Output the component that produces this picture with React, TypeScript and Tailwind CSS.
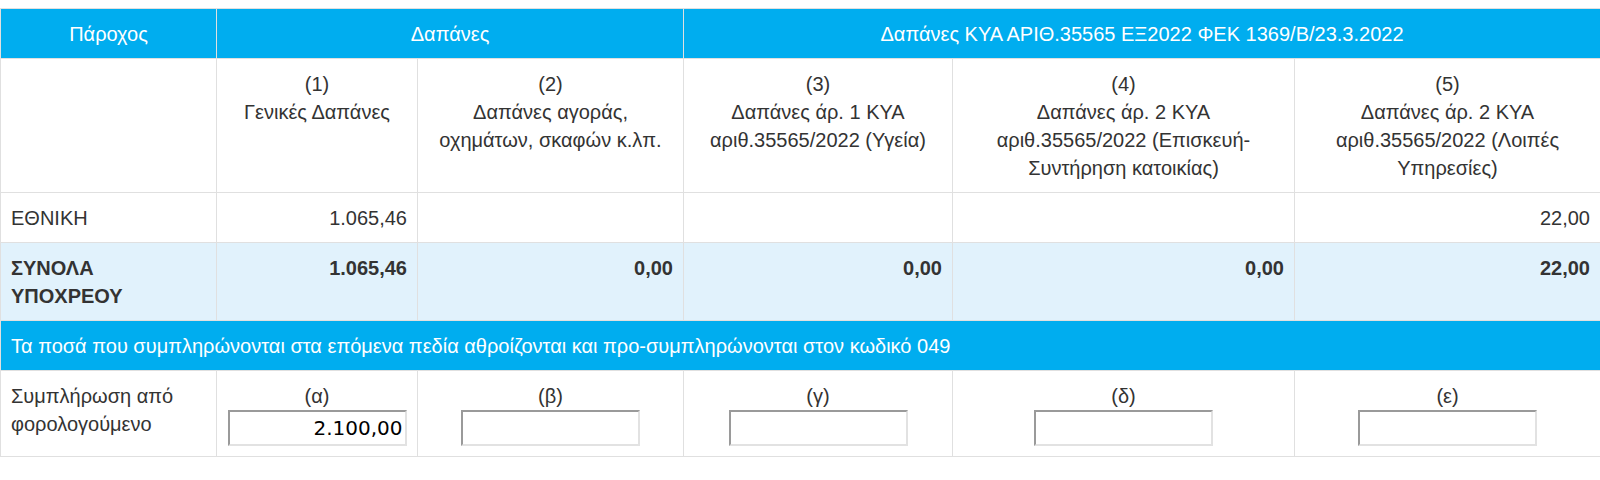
import React from "react";

const cell = "border border-[#e0e0e0] px-[10px] pt-[11px] pb-[10px] align-top";

function Field({ label, value }: { label: string; value?: string }) {
  return (
    <div className="flex flex-col items-center">
      <div className="leading-[28px] text-[#333]">{label}</div>
      <input
        readOnly
        value={value ?? ""}
        className="box-border h-[36px] w-[179px] border-2 border-t-[#9a9a9a] border-l-[#9a9a9a] border-b-[#e2e2e2] border-r-[#e2e2e2] bg-white px-[2px] text-right font-['DejaVu_Sans',Verdana,sans-serif] text-[20px] text-black outline-none"
      />
    </div>
  );
}

export default function App() {
  return (
    <div className="w-[1600px] bg-white pt-[8px] font-['Liberation_Sans',Arial,sans-serif] text-[20px] leading-[28px] text-[#333]">
      <table className="w-full table-fixed border-collapse">
        <colgroup>
          <col className="w-[216px]" />
          <col className="w-[201px]" />
          <col className="w-[266px]" />
          <col className="w-[269px]" />
          <col className="w-[342px]" />
          <col className="w-[306px]" />
        </colgroup>
        <tbody>
          <tr className="bg-[#00adef] text-white">
            <td className={`${cell} text-center`}>Πάροχος</td>
            <td className={`${cell} text-center`} colSpan={2}>Δαπάνες</td>
            <td className={`${cell} text-center`} colSpan={3}>Δαπάνες ΚΥΑ ΑΡΙΘ.35565 ΕΞ2022 ΦΕΚ 1369/Β/23.3.2022</td>
          </tr>
          <tr className="bg-white">
            <td className={cell}></td>
            <td className={`${cell} text-center`}>(1)<br />Γενικές Δαπάνες</td>
            <td className={`${cell} text-center`}>(2)<br />Δαπάνες αγοράς,<br />οχημάτων, σκαφών κ.λπ.</td>
            <td className={`${cell} text-center`}>(3)<br />Δαπάνες άρ. 1 ΚΥΑ<br />αριθ.35565/2022 (Υγεία)</td>
            <td className={`${cell} text-center`}>(4)<br />Δαπάνες άρ. 2 ΚΥΑ<br />αριθ.35565/2022 (Επισκευή-<br />Συντήρηση κατοικίας)</td>
            <td className={`${cell} text-center`}>(5)<br />Δαπάνες άρ. 2 ΚΥΑ<br />αριθ.35565/2022 (Λοιπές<br />Υπηρεσίες)</td>
          </tr>
          <tr className="bg-white">
            <td className={cell}>ΕΘΝΙΚΗ</td>
            <td className={`${cell} text-right`}>1.065,46</td>
            <td className={cell}></td>
            <td className={cell}></td>
            <td className={cell}></td>
            <td className={`${cell} text-right`}>22,00</td>
          </tr>
          <tr className="bg-[#e1f2fc] font-bold">
            <td className={cell}>ΣΥΝΟΛΑ<br />ΥΠΟΧΡΕΟΥ</td>
            <td className={`${cell} text-right`}>1.065,46</td>
            <td className={`${cell} text-right`}>0,00</td>
            <td className={`${cell} text-right`}>0,00</td>
            <td className={`${cell} text-right`}>0,00</td>
            <td className={`${cell} text-right`}>22,00</td>
          </tr>
          <tr className="bg-[#00adef] text-white">
            <td className={`${cell} whitespace-nowrap`} colSpan={6}>
              Τα ποσά που συμπληρώνονται στα επόμενα πεδία αθροίζονται και προ-συμπληρώνονται στον κωδικό 049
            </td>
          </tr>
          <tr className="bg-white">
            <td className={cell}>Συμπλήρωση από<br />φορολογούμενο</td>
            <td className={cell}><Field label="(α)" value="2.100,00" /></td>
            <td className={cell}><Field label="(β)" /></td>
            <td className={cell}><Field label="(γ)" /></td>
            <td className={cell}><Field label="(δ)" /></td>
            <td className={cell}><Field label="(ε)" /></td>
          </tr>
        </tbody>
      </table>
    </div>
  );
}
